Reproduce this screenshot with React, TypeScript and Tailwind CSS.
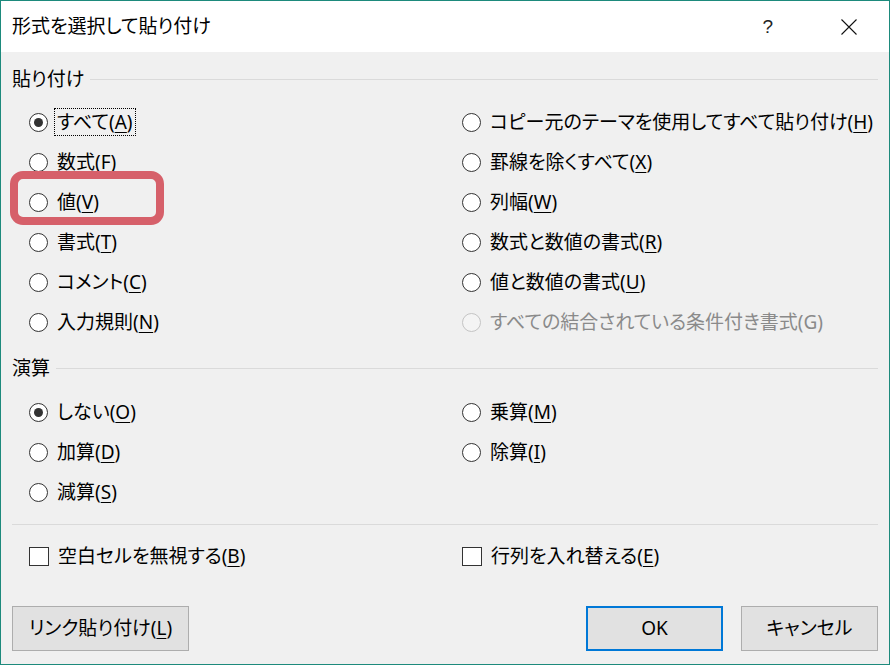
import React from "react";

const FONT = "font-['Noto_Sans','Noto_Sans_CJK_JP',sans-serif] [font-feature-settings:'palt']";

type Opt = { t: string; k: string; checked?: boolean; disabled?: boolean; focus?: boolean };

function Label({ t, k, disabled }: { t: string; k: string; disabled?: boolean }) {
  return (
    <span>
      {t}(
      {disabled ? k : <span className="underline decoration-1 underline-offset-[3px]">{k}</span>})
    </span>
  );
}

function Radio({ o }: { o: Opt }) {
  return (
    <div className="h-[40px] flex items-center pl-[17px]">
      <div
        className={
          "w-[19px] h-[19px] rounded-full border flex items-center justify-center shrink-0 " +
          (o.disabled ? "border-[#c4c4c4] bg-[#f4f4f4]" : "border-[#333333] bg-white")
        }
      >
        {o.checked && <div className="w-[9px] h-[9px] rounded-full bg-[#333333]" />}
      </div>
      <div
        className={
          "ml-[6px] px-[2px] h-[28px] flex items-center border border-dotted " +
          (o.focus ? "border-black" : "border-transparent") +
          (o.disabled ? " text-[#8a8a8a]" : " text-black")
        }
      >
        <Label t={o.t} k={o.k} disabled={o.disabled} />
      </div>
    </div>
  );
}

function Check({ t, k }: { t: string; k: string }) {
  return (
    <div className="h-[40px] flex items-center pl-[17px]">
      <div className="w-[20px] h-[19px] border border-[#333333] bg-white shrink-0" />
      <div className="ml-[6px] px-[2px] h-[28px] flex items-center border border-transparent">
        <Label t={t} k={k} />
      </div>
    </div>
  );
}

function Header({ t }: { t: string }) {
  return (
    <div className="h-[24px] flex items-center gap-[6px]">
      <span className="text-black">{t}</span>
      <div className="flex-1 h-px bg-[#dadada]" />
    </div>
  );
}

const pasteLeft: Opt[] = [
  { t: "すべて", k: "A", checked: true, focus: true },
  { t: "数式", k: "F" },
  { t: "値", k: "V" },
  { t: "書式", k: "T" },
  { t: "コメント", k: "C" },
  { t: "入力規則", k: "N" },
];
const pasteRight: Opt[] = [
  { t: "コピー元のテーマを使用してすべて貼り付け", k: "H" },
  { t: "罫線を除くすべて", k: "X" },
  { t: "列幅", k: "W" },
  { t: "数式と数値の書式", k: "R" },
  { t: "値と数値の書式", k: "U" },
  { t: "すべての結合されている条件付き書式", k: "G", disabled: true },
];
const opLeft: Opt[] = [
  { t: "しない", k: "O", checked: true },
  { t: "加算", k: "D" },
  { t: "減算", k: "S" },
];
const opRight: Opt[] = [
  { t: "乗算", k: "M" },
  { t: "除算", k: "I" },
];

export default function App() {
  return (
    <div className={"relative w-[890px] h-[665px] border border-[#1d8a7c] bg-[#f0f0f0] flex flex-col text-[19px] leading-none " + FONT}>
      {/* title bar */}
      <div className="h-[51px] bg-white flex items-center pl-[11px] shrink-0">
        <span className="text-[19px] text-black">形式を選択して貼り付け</span>
        <div className="flex-1" />
        <span className="text-[19px] text-[#222] font-['Liberation_Sans',sans-serif] mr-[68px] font-light">?</span>
        <svg width="16" height="16" viewBox="0 0 16 16" className="mr-[32px]">
          <path d="M0.5 0.5 L15.5 15.5 M15.5 0.5 L0.5 15.5" stroke="#111" strokeWidth="1.1" fill="none" />
        </svg>
      </div>

      {/* body */}
      <div className="flex flex-col px-[11px]">
        <div className="mt-[15px]">
          <Header t="貼り付け" />
        </div>
        <div className="mt-[11px] grid grid-cols-[433px_1fr]">
          <div className="flex flex-col">
            {pasteLeft.map((o) => (
              <Radio key={o.k} o={o} />
            ))}
          </div>
          <div className="flex flex-col">
            {pasteRight.map((o) => (
              <Radio key={o.k} o={o} />
            ))}
          </div>
        </div>

        <div className="mt-[14px]">
          <Header t="演算" />
        </div>
        <div className="mt-[12px] grid grid-cols-[433px_1fr]">
          <div className="flex flex-col">
            {opLeft.map((o) => (
              <Radio key={o.k} o={o} />
            ))}
          </div>
          <div className="flex flex-col">
            {opRight.map((o) => (
              <Radio key={o.k} o={o} />
            ))}
          </div>
        </div>

        <div className="mt-[12px] h-px bg-[#dadada]" />

        <div className="mt-[11px] grid grid-cols-[433px_1fr]">
          <Check t="空白セルを無視する" k="B" />
          <Check t="行列を入れ替える" k="E" />
        </div>

        <div className="mt-[30px] flex items-center">
          <button className="w-[177px] h-[45px] bg-[#e1e1e1] border border-[#adadad] text-black flex items-center justify-center">
            <Label t="リンク貼り付け" k="L" />
          </button>
          <div className="flex-1" />
          <button className="w-[137px] h-[45px] bg-[#e1e1e1] border-2 border-[#0078d7] text-black flex items-center justify-center">
            OK
          </button>
          <button className="ml-[18px] w-[137px] h-[45px] bg-[#e1e1e1] border border-[#adadad] text-black flex items-center justify-center">
            キャンセル
          </button>
        </div>
      </div>

      {/* highlight */}
      <div className="absolute left-[9px] top-[170px] w-[154px] h-[54px] border-[8px] border-[#d6606a] rounded-[13px] pointer-events-none" />
    </div>
  );
}
